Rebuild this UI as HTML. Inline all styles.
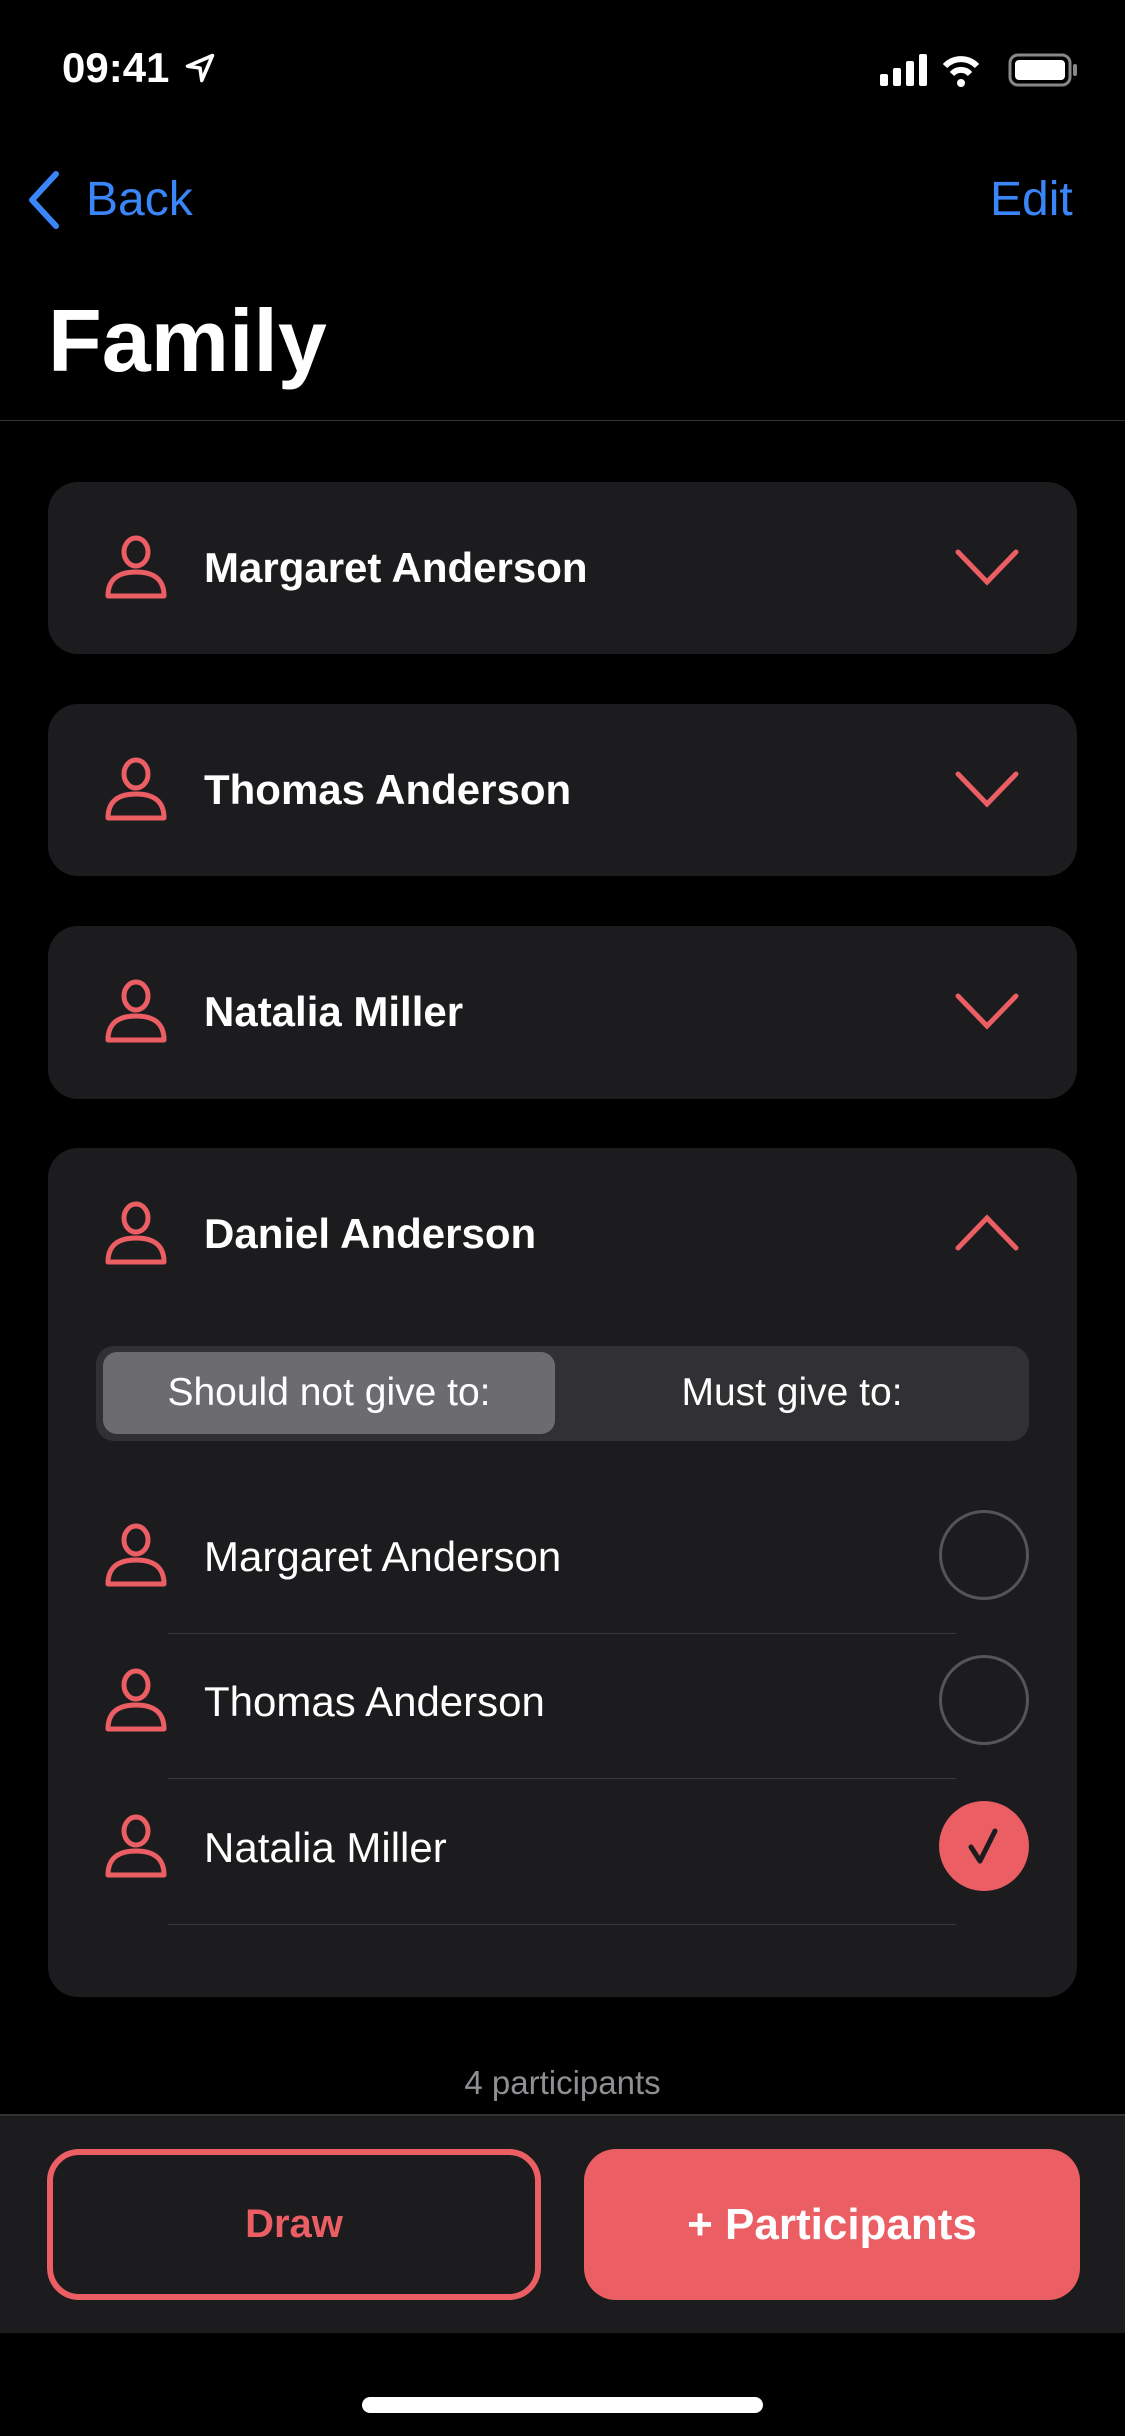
<!DOCTYPE html>
<html><head><meta charset="utf-8"><style>
*{margin:0;padding:0;box-sizing:border-box}
body{width:1125px;height:2436px;background:#000;font-family:"Liberation Sans",sans-serif;color:#fff;position:relative;overflow:hidden}
.a{position:absolute}
.card{position:absolute;left:48px;width:1029px;background:#1c1c1e;border-radius:30px}
.name{position:absolute;left:156px;font-weight:bold;font-size:42px}
.row{position:absolute;left:156px;font-size:42px}
.sep{position:absolute;left:120px;width:788px;height:1px;background:#3a3a3c}
.circ{position:absolute;left:891px;width:90px;height:90px;border-radius:50%;border:3px solid #555558}
</style></head><body>
<div class="a" style="left:62px;top:44px;font-size:42px;font-weight:bold">09:41</div>
<svg class="a" style="left:184px;top:52px" width="32" height="32" viewBox="0 0 36 36"><path d="M32 4 L4 16 L18 18 L20 32 Z" fill="none" stroke="#fff" stroke-width="4" stroke-linejoin="round"/></svg>
<svg class="a" style="left:880px;top:50px" width="200" height="40" viewBox="0 0 200 40">
<rect x="0" y="24" width="8" height="12" rx="2" fill="#fff"/><rect x="13" y="18" width="8" height="18" rx="2" fill="#fff"/><rect x="26" y="11" width="8" height="25" rx="2" fill="#fff"/><rect x="39" y="4" width="8" height="32" rx="2" fill="#fff"/>
<path d="M65 16 A22 22 0 0 1 97 16" stroke="#fff" stroke-width="6" fill="none"/><path d="M72 24 A12 12 0 0 1 90 24" stroke="#fff" stroke-width="6" fill="none"/><circle cx="81" cy="33" r="4" fill="#fff"/>
<rect x="130" y="5" width="60" height="30" rx="8" fill="none" stroke="#888" stroke-width="3"/><rect x="135" y="10" width="50" height="20" rx="4" fill="#fff"/><rect x="193" y="14" width="4" height="12" rx="2" fill="#888"/></svg>
<svg class="a" style="left:24px;top:170px" width="40" height="60" viewBox="0 0 40 60"><path d="M32 4 L8 30 L32 56" stroke="#3a85f7" stroke-width="6" fill="none" stroke-linecap="round" stroke-linejoin="round"/></svg>
<div class="a" style="left:86px;top:172px;font-size:48px;color:#3a85f7">Back</div>
<div class="a" style="left:990px;top:172px;font-size:48px;color:#3a85f7">Edit</div>
<div class="a" style="left:48px;top:290px;font-size:88px;font-weight:bold">Family</div>
<div class="a" style="left:0;top:420px;width:1125px;height:1px;background:#333"></div>

<svg width="0" height="0" style="position:absolute"><defs><g id="p"><ellipse cx="32" cy="18" rx="12" ry="14" fill="none" stroke="#eb5e63" stroke-width="5"/><path d="M4 62 Q4 38 32 38 Q60 38 60 62 Z" fill="none" stroke="#eb5e63" stroke-width="5" stroke-linejoin="round"/></g></defs></svg>

<div class="card" style="top:482px;height:172px"><svg class="a" style="left:56px;top:52px" width="66" height="68"><use href="#p"/></svg><div class="name" style="top:62px">Margaret Anderson</div><svg class="a" style="left:906px;top:66px" width="66" height="40"><path d="M4 4 L33 34 L62 4" stroke="#eb5e63" stroke-width="5" fill="none" stroke-linecap="round"/></svg></div>
<div class="card" style="top:704px;height:172px"><svg class="a" style="left:56px;top:52px" width="66" height="68"><use href="#p"/></svg><div class="name" style="top:62px">Thomas Anderson</div><svg class="a" style="left:906px;top:66px" width="66" height="40"><path d="M4 4 L33 34 L62 4" stroke="#eb5e63" stroke-width="5" fill="none" stroke-linecap="round"/></svg></div>
<div class="card" style="top:926px;height:173px"><svg class="a" style="left:56px;top:52px" width="66" height="68"><use href="#p"/></svg><div class="name" style="top:62px">Natalia Miller</div><svg class="a" style="left:906px;top:66px" width="66" height="40"><path d="M4 4 L33 34 L62 4" stroke="#eb5e63" stroke-width="5" fill="none" stroke-linecap="round"/></svg></div>

<div class="card" style="top:1148px;height:849px">
<svg class="a" style="left:56px;top:52px" width="66" height="68"><use href="#p"/></svg><div class="name" style="top:62px">Daniel Anderson</div><svg class="a" style="left:906px;top:66px" width="66" height="40"><path d="M4 34 L33 4 L62 34" stroke="#eb5e63" stroke-width="5" fill="none" stroke-linecap="round"/></svg>
<div class="a" style="left:48px;top:198px;width:933px;height:95px;background:#313134;border-radius:18px"></div>
<div class="a" style="left:55px;top:204px;width:452px;height:82px;background:#6c6c70;border-radius:14px;font-size:39px;text-align:center;line-height:82px">Should not give to:</div>
<div class="a" style="left:507px;top:204px;width:474px;height:82px;font-size:39px;text-align:center;line-height:82px">Must give to:</div>
<svg class="a" style="left:56px;top:374px" width="66" height="68"><use href="#p"/></svg><div class="row" style="top:385px">Margaret Anderson</div><div class="circ" style="top:362px"></div><div class="sep" style="top:485px"></div>
<svg class="a" style="left:56px;top:519px" width="66" height="68"><use href="#p"/></svg><div class="row" style="top:530px">Thomas Anderson</div><div class="circ" style="top:507px"></div><div class="sep" style="top:630px"></div>
<svg class="a" style="left:56px;top:665px" width="66" height="68"><use href="#p"/></svg><div class="row" style="top:676px">Natalia Miller</div>
<div class="a" style="left:891px;top:653px;width:90px;height:90px;border-radius:50%;background:#eb5e63"></div>
<svg class="a" style="left:911px;top:673px" width="50" height="50"><path d="M12 26 L21 40 L36 10" stroke="#1c1c1e" stroke-width="5" fill="none" stroke-linecap="round" stroke-linejoin="round"/></svg>
<div class="sep" style="top:776px"></div>
</div>

<div class="a" style="left:0;top:2064px;width:1125px;text-align:center;font-size:33px;color:#8e8e93">4 participants</div>
<div class="a" style="left:0;top:2114px;width:1125px;height:219px;background:#1c1c1e;border-top:2px solid #333"></div>
<div class="a" style="left:47px;top:2149px;width:494px;height:151px;border:6px solid #eb5e63;border-radius:32px;color:#eb5e63;font-size:40px;font-weight:bold;text-align:center;line-height:139px">Draw</div>
<div class="a" style="left:584px;top:2149px;width:496px;height:151px;background:#eb5e63;border-radius:32px;font-size:44px;font-weight:bold;text-align:center;line-height:151px">+ Participants</div>
<div class="a" style="left:362px;top:2397px;width:401px;height:16px;border-radius:8px;background:#fff"></div>
</body></html>
